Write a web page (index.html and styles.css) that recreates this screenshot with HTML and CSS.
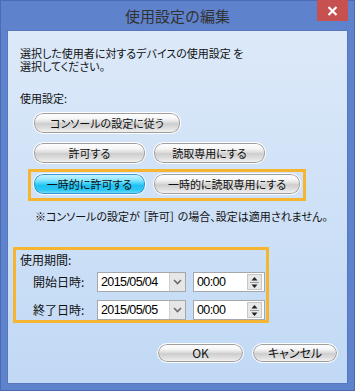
FILE: index.html
```html
<!DOCTYPE html>
<html lang="ja">
<head>
<meta charset="utf-8">
<link rel="stylesheet" href="styles.css">
</head>
<body>
<div class="window">
  <div class="titlebar">
    <span></span>
    <div class="title">使用設定の編集</div>
    <div class="close">
      <svg width="11" height="10" viewBox="0 0 11 10"><path d="M1.5 1 L9.5 9 M9.5 1 L1.5 9" stroke="#fff" stroke-width="2.2" fill="none"/></svg>
    </div>
  </div>
  <div class="client">
    <p class="desc">選択した使用者に対するデバイスの使用設定 を<br>選択してください。</p>
    <p class="label">使用設定:</p>
    <div class="btn-row r1"><button class="btn wide">コンソールの設定に従う</button></div>
    <div class="btn-row r2"><button class="btn narrow">許可する</button><button class="btn narrow">読取専用にする</button></div>
    <div class="hl hl1"><button class="btn blue narrow">一時的に許可する</button><button class="btn wide">一時的に読取専用にする</button></div>
    <p class="note">※コンソールの設定が ［許可］ の場合、設定は適用されません。</p>
    <div class="hl hl2">
      <p class="plabel">使用期間:</p>
      <div class="prow">
        <span class="rlabel">開始日時:</span>
        <div class="date"><span class="val">2015/05/04</span><span class="dd"><svg width="9" height="6" viewBox="0 0 9 6"><path d="M1 1 L4.5 4.5 L8 1" stroke="#6b6b6b" stroke-width="1.6" fill="none"/></svg></span></div>
        <div class="time"><span class="val">00:00</span><span class="spin"><svg width="11" height="15" viewBox="0 0 11 15"><path d="M5.5 2 L8.5 5.5 L2.5 5.5 Z M2.5 9.5 L8.5 9.5 L5.5 13 Z" fill="#222"/><path d="M1 7.5 H10" stroke="#9a9a9a" stroke-width="1"/></svg></span></div>
      </div>
      <div class="prow second">
        <span class="rlabel">終了日時:</span>
        <div class="date"><span class="val">2015/05/05</span><span class="dd"><svg width="9" height="6" viewBox="0 0 9 6"><path d="M1 1 L4.5 4.5 L8 1" stroke="#6b6b6b" stroke-width="1.6" fill="none"/></svg></span></div>
        <div class="time"><span class="val">00:00</span><span class="spin"><svg width="11" height="15" viewBox="0 0 11 15"><path d="M5.5 2 L8.5 5.5 L2.5 5.5 Z M2.5 9.5 L8.5 9.5 L5.5 13 Z" fill="#222"/><path d="M1 7.5 H10" stroke="#9a9a9a" stroke-width="1"/></svg></span></div>
      </div>
    </div>
    <div class="actions"><button class="btn ok">OK</button><button class="btn cancel">キャンセル</button></div>
  </div>
</div>
</body>
</html>
```

FILE: styles.css
```css
html, body {
  margin: 0;
  padding: 0;
  background: #5f82cc;
}
body {
  font-family: "Noto Sans CJK JP", "Noto Sans", sans-serif;
  color: #111;
}
.window {
  width: 355px;
  height: 391px;
  box-sizing: border-box;
  border: 1px solid #4a6cb5;
  background: #5f82cc;
  display: flex;
  flex-direction: column;
}
.titlebar {
  height: 31px;
  margin: -1px 6px 0 6px;
  display: grid;
  grid-template-columns: 1fr auto 1fr;
  align-items: start;
}
.title {
  font-size: 15px;
  line-height: 32px;
  color: #333;
}
.close {
  justify-self: end;
  width: 31px;
  height: 21px;
  background: #c75050;
  display: flex;
  align-items: center;
  justify-content: center;
}
.client {
  margin-left: 7px;
  width: 339px;
  height: 352px;
  box-sizing: border-box;
  background: linear-gradient(#dce9f9, #c1d9f5);
  outline: 1px solid #5677c0;
  display: flex;
  flex-direction: column;
  align-items: flex-start;
}
p { margin: 0; }
.desc {
  margin: 16px 0 0 12px;
  font-size: 11px;
  line-height: 13px;
  font-feature-settings: "palt";
}
.label {
  margin: 20px 0 0 12px;
  font-size: 11px;
  line-height: 11px;
}
.btn-row {
  display: flex;
  gap: 7px;
}
.r1 { margin: 8px 0 0 25px; }
.r2 { margin: 8px 0 0 25px; }
.btn {
  font-family: inherit;
  font-size: 11px;
  line-height: 1;
  color: #111;
  height: 22px;
  padding: 0;
  box-sizing: border-box;
  border: 1px solid #fbfdff;
  border-radius: 10px;
  box-shadow: inset 0 0 0 1px #9e9e9e;
  background: linear-gradient(#ffffff 0%, #f6f6f6 28%, #dedede 46%, #cdcdcd 54%, #e0e0e0 78%, #f7f7f7 100%);
  font-feature-settings: "palt";
}
.narrow { width: 113px; }
.wide { width: 148px; }
.blue {
  box-shadow: inset 0 0 0 1px #3a93d2;
  background: linear-gradient(#d2f6ff 0%, #8ee6fd 30%, #3fd2f9 48%, #1fc1f2 58%, #2fc8f4 82%, #8fe2fb 100%);
}
.hl {
  border: 3px solid #f5b531;
}
.hl1 {
  margin: 5px 0 0 20px;
  display: flex;
  gap: 7px;
  padding: 1px 2px 3px 2px;
}
.note {
  margin: 10px 0 0 27px;
  font-size: 11px;
  line-height: 11px;
  font-feature-settings: "palt";
}
.hl2 {
  margin: 25px 0 0 5px;
  width: 256px;
  height: 76px;
  box-sizing: border-box;
  padding: 4px 0 0 4px;
}
.plabel {
  font-size: 12px;
  line-height: 12px;
}
.prow {
  margin: 6px 0 0 13px;
  display: flex;
  align-items: center;
  height: 20px;
}
.prow.second { margin-top: 8px; }
.rlabel {
  width: 64px;
  font-size: 12px;
  line-height: 12px;
}
.date, .time {
  height: 20px;
  box-sizing: border-box;
  border: 1px solid #a5a7ab;
  background: #fff;
  display: flex;
  align-items: stretch;
}
.date { width: 89px; }
.time { width: 72px; margin-left: 7px; }
.val {
  flex: 1;
  font-family: "Liberation Sans", sans-serif;
  font-size: 12.5px;
  line-height: 18px;
  padding-left: 3px;
  letter-spacing: -0.6px;
  color: #000;
}
.dd {
  width: 15px;
  background: #e6e6e6;
  border-left: 1px solid #d0d0d0;
  display: flex;
  align-items: center;
  justify-content: center;
}
.spin {
  width: 15px;
  margin: 1px 2px 1px 0;
  background: #e8e8e8;
  border: 1px solid #c6c6c6;
  box-sizing: border-box;
  display: flex;
  align-items: center;
  justify-content: center;
}
.actions {
  margin: 20px 9px 0 0;
  align-self: flex-end;
  display: flex;
  gap: 8px;
}
.ok, .cancel {
  height: 20px;
  font-size: 12px;
}
.ok { width: 87px; }
.cancel { width: 86px; }
```
